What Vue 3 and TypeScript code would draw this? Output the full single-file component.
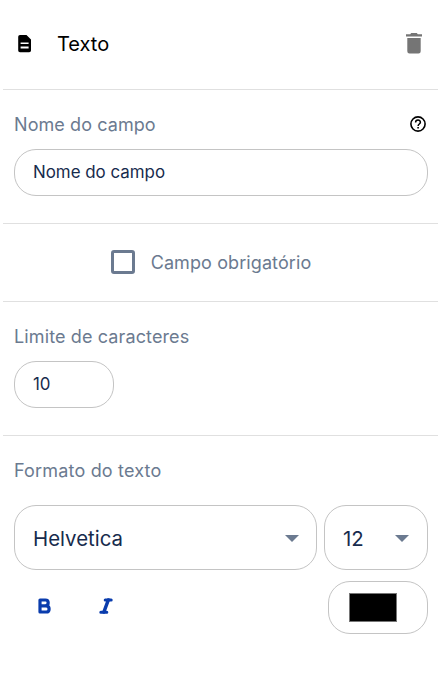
<script setup lang="ts">
import { ref } from 'vue'

const fieldName = ref<string>('Nome do campo')
const required = ref<boolean>(false)
const limit = ref<string>('10')
const font = ref<string>('Helvetica')
const size = ref<string>('12')
</script>

<template>
  <main class="panel">
    <header class="row header">
      <svg class="doc" viewBox="0 0 14 18" width="14" height="18">
        <path fill="#000" fill-rule="evenodd" d="M2 0H8.5L13 4.5V15.5Q13 17.3 11.2 17.3H2Q.2 17.3 .2 15.5V1.8Q.2 0 2 0ZM2.6 7.4V9.1H10.6V7.4ZM2.6 11.6V13.4H10.6V11.6Z" />
      </svg>
      <h1 class="title">Texto</h1>
      <button class="plain trash" type="button" aria-label="Excluir">
        <svg viewBox="0 0 16 21" width="16" height="21">
          <path fill="#757575" d="M1.3 5H14.7V18.2Q14.7 20.4 12.5 20.4H3.5Q1.3 20.4 1.3 18.2ZM0 1.2H4.2L5.2 0H10.8L11.8 1.2H16V3.5H0Z" />
        </svg>
      </button>
    </header>

    <section class="row block name">
      <div class="label-row">
        <label class="label w-nome" for="name">Nome do campo</label>
        <svg class="help" viewBox="0 0 16 16" width="16" height="16" fill="none" stroke="#000">
          <circle cx="8" cy="8" r="7.1" stroke-width="1.6" />
          <path d="M5.6 6.4C5.6 3.3 10.4 3.3 10.4 6.2C10.4 8 8.1 8 8.1 10" stroke-width="1.5" />
          <path d="M8.1 11V12.6" stroke-width="1.6" />
        </svg>
      </div>
      <input id="name" v-model="fieldName" class="input" type="text" />
    </section>

    <section class="row required">
      <button class="plain check" type="button" role="checkbox" :aria-checked="required" @click="required = !required">
        <span class="box"></span>
        <span class="label w-req">Campo obrigatório</span>
      </button>
    </section>

    <section class="row block limit">
      <div class="label-row"><label class="label w-lim" for="limit">Limite de caracteres</label></div>
      <input id="limit" v-model="limit" class="input short" type="text" />
    </section>

    <section class="block format">
      <div class="label-row"><span class="label w-fmt">Formato do texto</span></div>
      <div class="selects">
        <div class="select family">
          <span class="value">{{ font }}</span>
          <svg viewBox="0 0 14 7" width="14" height="7"><path fill="#6b7a90" d="M0 0H14L7 7Z" /></svg>
        </div>
        <div class="select size">
          <span class="value">{{ size }}</span>
          <svg viewBox="0 0 14 7" width="14" height="7"><path fill="#6b7a90" d="M0 0H14L7 7Z" /></svg>
        </div>
      </div>
      <div class="tools">
        <button class="plain bold" type="button" aria-label="Negrito">
          <svg viewBox="0 0 13 16" width="13" height="16" fill="none" stroke="#0a3cad" stroke-width="3.2" stroke-linejoin="round">
            <path d="M2 2H7.4Q10.2 2 10.2 4.8T7.4 7.8H2ZM2 7.8H8.2Q11.1 7.8 11.1 10.9T8.2 14H2Z" />
          </svg>
        </button>
        <button class="plain italic" type="button" aria-label="Itálico">
          <svg viewBox="0 0 14 16" width="14" height="16" fill="none" stroke="#0a3cad" stroke-width="3" stroke-linecap="round">
            <path d="M6.2 2H12.2M1.8 14.2H7.8" />
            <path d="M9.3 2L4.9 14" stroke-width="3.5" />
          </svg>
        </button>
        <div class="color"><span class="swatch"></span></div>
      </div>
    </section>
  </main>
</template>

<style>
body {
  background: #fff;
}
</style>

<style scoped>
.panel,
.panel * {
  box-sizing: border-box;
}
.panel {
  width: 435px;
  height: 680px;
  margin-left: 3px;
  font-family: Inter, "Liberation Sans", sans-serif;
  font-weight: 400;
}
.row {
  border-bottom: 1px solid #e0e0e0;
}
.plain {
  display: flex;
  align-items: center;
  padding: 0;
  border: 0;
  background: none;
  font: inherit;
}
.header {
  display: flex;
  align-items: center;
  height: 90px;
  padding: 0 16px 2px 15px;
}
.title {
  margin: 0 0 0 25px;
  font-size: 20px;
  font-weight: 400;
  line-height: 28px;
  color: #000;
}
.trash {
  margin-left: auto;
}
.block {
  padding: 23px 10px 0 11px;
}
.name,
.limit {
  height: 134px;
}
.label-row {
  display: flex;
  align-items: center;
  justify-content: space-between;
  height: 24px;
}
.label {
  font-size: 18px;
  line-height: 24px;
  color: #6b7a90;
  white-space: nowrap;
}
.w-nome {
  letter-spacing: 0.08px;
}
.w-req {
  letter-spacing: 0.1px;
}
.w-lim {
  letter-spacing: 0.12px;
}
.w-fmt {
  letter-spacing: 0.18px;
}
.help {
  margin: 0 2px 2px 0;
}
.input {
  display: block;
  width: 414px;
  height: 47px;
  margin-top: 12px;
  padding: 0 18px 1px;
  border: 1px solid #c4c4c4;
  border-radius: 22px;
  outline: 0;
  background: #fff;
  color: #172b4d;
  font: 400 16.9px/24px Inter, "Liberation Sans", sans-serif;
}
.short {
  width: 100px;
}
.required {
  display: flex;
  align-items: center;
  justify-content: center;
  height: 78px;
  padding-right: 19px;
}
.check {
  gap: 16px;
}
.box {
  width: 24px;
  height: 24px;
  margin-bottom: 2px;
  border: 3px solid #6b7a90;
  border-radius: 3px;
}
.selects {
  display: flex;
  gap: 7px;
  margin-top: 22px;
}
.select {
  display: flex;
  align-items: center;
  justify-content: space-between;
  height: 65px;
  padding: 1px 17px 0 18px;
  border: 1px solid #c4c4c4;
  border-radius: 22px;
  color: #172b4d;
}
.family {
  width: 303px;
}
.size {
  width: 104px;
  padding-right: 18px;
}
.value {
  font-size: 20.4px;
  line-height: 29px;
}
.tools {
  display: flex;
  align-items: flex-start;
  margin-top: 11px;
}
.bold {
  margin: 17px 0 0 24px;
}
.italic {
  margin: 17px 0 0 48px;
}
.color {
  display: flex;
  align-items: center;
  width: 100px;
  height: 53px;
  margin-left: auto;
  padding-left: 20px;
  border: 1px solid #c4c4c4;
  border-radius: 22px;
}
.swatch {
  width: 48px;
  height: 29px;
  border: 1px solid #767676;
  background: #000;
}
</style>
